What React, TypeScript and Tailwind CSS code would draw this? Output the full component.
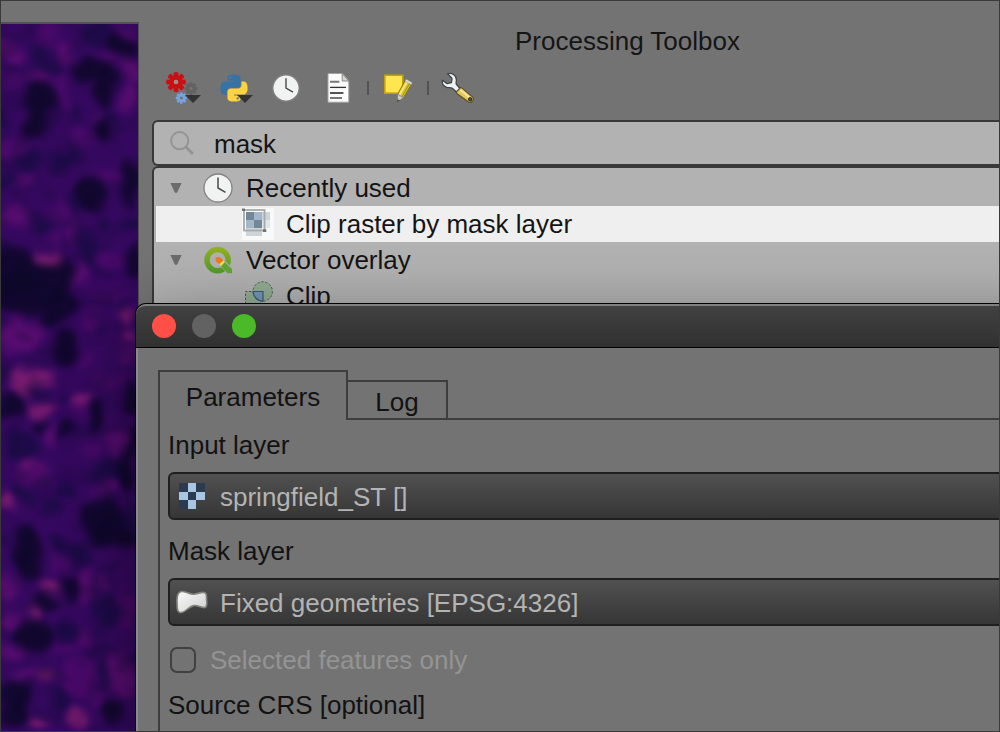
import React from "react";

type Blob = [x: number, y: number, rx: number, ry: number, tone: number];

const TONES = ["#0d0829", "#1c0b47", "#4a0a69", "#5a0d70", "#821e72"];

const BLOBS: Blob[] = [
  [95, 35, 12, 14, 1], [122, 44, 16, 12, 0], [84, 70, 14, 10, 0], [104, 86, 10, 22, 0],
  [112, 72, 8, 8, 0], [128, 32, 10, 6, 2], [110, 60, 14, 5, 2], [132, 70, 8, 14, 3],
  [128, 96, 8, 12, 3], [50, 34, 8, 14, 2], [64, 52, 7, 14, 3], [10, 50, 12, 14, 3],
  [40, 54, 10, 10, 1], [52, 68, 10, 8, 1], [38, 76, 12, 6, 3], [60, 84, 10, 8, 2],
  [40, 100, 16, 18, 0], [36, 128, 14, 14, 0], [14, 84, 12, 8, 2], [4, 118, 5, 14, 1],
  [102, 130, 10, 12, 0], [114, 118, 8, 6, 1], [98, 117, 8, 3, 3], [72, 112, 5, 6, 1],
  [82, 138, 9, 14, 2], [62, 100, 6, 12, 2], [12, 150, 16, 14, 2], [56, 162, 12, 12, 1],
  [74, 152, 8, 8, 1], [28, 162, 12, 10, 1], [24, 184, 8, 8, 3], [8, 180, 9, 6, 1],
  [90, 194, 15, 17, 0], [72, 204, 8, 9, 1], [130, 184, 8, 22, 0], [108, 174, 12, 8, 2],
  [58, 212, 8, 12, 2], [16, 216, 16, 10, 3], [42, 224, 12, 10, 1], [105, 224, 8, 10, 1],
  [130, 226, 8, 10, 1], [72, 234, 6, 14, 3], [54, 240, 6, 10, 2], [88, 250, 10, 14, 1],
  [12, 270, 26, 24, 0], [20, 294, 30, 24, 0], [56, 280, 22, 22, 0], [46, 260, 10, 6, 4],
  [60, 305, 18, 18, 0], [80, 272, 6, 14, 3], [112, 258, 12, 10, 2], [132, 262, 7, 14, 0],
  [104, 294, 22, 6, 2], [47, 321, 12, 7, 0], [92, 318, 10, 10, 2], [129, 318, 7, 7, 4],
  [126, 336, 7, 5, 4], [130, 354, 7, 7, 3], [22, 338, 18, 15, 3], [64, 348, 14, 18, 0],
  [8, 352, 8, 6, 2], [90, 358, 10, 8, 2], [4, 378, 5, 10, 1], [34, 377, 22, 6, 4],
  [24, 388, 10, 8, 4], [10, 406, 13, 11, 0], [40, 410, 16, 6, 4], [80, 400, 10, 11, 3],
  [80, 398, 10, 5, 4], [42, 391, 9, 5, 1], [62, 400, 6, 6, 1], [96, 415, 8, 18, 0],
  [40, 426, 6, 8, 0], [70, 432, 6, 12, 0], [54, 437, 7, 10, 3], [92, 448, 12, 6, 2],
  [118, 444, 7, 12, 3], [130, 396, 6, 14, 0], [132, 446, 6, 24, 0], [108, 380, 18, 6, 2],
  [22, 446, 18, 12, 1], [26, 465, 5, 5, 4], [34, 474, 16, 9, 3], [110, 470, 20, 12, 1],
  [126, 478, 10, 16, 0], [6, 504, 7, 8, 4], [24, 494, 10, 8, 1], [48, 506, 12, 8, 1],
  [68, 490, 12, 10, 1], [104, 490, 11, 6, 3], [100, 518, 24, 18, 0], [112, 536, 24, 14, 0],
  [130, 516, 6, 18, 1], [28, 546, 15, 22, 0], [30, 568, 11, 14, 0], [62, 542, 8, 8, 1],
  [80, 556, 12, 12, 1], [60, 562, 8, 12, 2], [48, 589, 11, 6, 4], [70, 590, 11, 12, 0],
  [87, 586, 7, 15, 3], [104, 582, 6, 10, 3], [8, 586, 9, 16, 3], [44, 604, 12, 7, 0],
  [32, 613, 6, 6, 4], [10, 620, 10, 8, 3], [34, 636, 20, 16, 0], [68, 632, 12, 10, 1],
  [82, 638, 9, 8, 3], [108, 612, 14, 16, 1], [128, 610, 10, 20, 2], [10, 650, 14, 6, 3],
  [66, 650, 12, 5, 2], [44, 676, 11, 8, 4], [24, 674, 9, 5, 3], [78, 678, 18, 18, 2],
  [122, 676, 14, 22, 3], [106, 672, 6, 12, 1], [16, 696, 17, 16, 0], [12, 716, 16, 12, 0],
  [114, 712, 14, 9, 0], [76, 718, 10, 10, 4], [38, 724, 10, 6, 4], [60, 700, 10, 12, 1],
  [96, 700, 8, 12, 2],
];

function HeatMap() {
  return (
    <svg
      className="block size-full"
      viewBox="1 24 137 707"
      preserveAspectRatio="xMinYMin slice"
      role="img"
      aria-label="Surface temperature raster"
    >
      <defs>
        <filter id="soften" filterUnits="userSpaceOnUse" x="-20" y="0" width="200" height="760" colorInterpolationFilters="sRGB">
          <feGaussianBlur stdDeviation="3" result="soft" />
          <feTurbulence type="fractalNoise" baseFrequency="0.04" numOctaves="1" seed="11" result="warp" />
          <feDisplacementMap in="soft" in2="warp" scale="22" xChannelSelector="R" yChannelSelector="G" />
          <feGaussianBlur stdDeviation="2.5" />
        </filter>
        <filter id="mottle" x="0" y="0" width="100%" height="100%" colorInterpolationFilters="sRGB">
          <feTurbulence type="fractalNoise" baseFrequency="0.035 0.045" numOctaves="2" seed="7" />
          <feColorMatrix values="0 0 0 0 0.08  0 0 0 0 0.04  0 0 0 0 0.22  3 0 0 0 -1.4" />
        </filter>
      </defs>
      <g filter="url(#soften)">
        <rect x="-40" y="-20" width="240" height="800" fill="#35085f" />
        {BLOBS.map(([x, y, rx, ry, tone], i) => (
          <ellipse key={i} cx={x} cy={y} rx={rx} ry={ry} fill={TONES[tone]} opacity="0.9" />
        ))}
      </g>
      <rect x="0" y="0" width="160" height="760" filter="url(#mottle)" opacity="0.35" />
    </svg>
  );
}

function Gear({ x, y, r, color, hub }: { x: number; y: number; r: number; color: string; hub: string }) {
  return (
    <g transform={`translate(${x} ${y}) scale(${r / 10})`}>
      {[0, 45, 90, 135, 180, 225, 270, 315].map((a) => (
        <path key={a} d="M-2 -5 L-2.5 -9.2 Q0 -11 2.5 -9.2 L2 -5Z" fill={color} transform={`rotate(${a})`} />
      ))}
      <circle r="4.6" fill="none" stroke={color} strokeWidth="4.6" />
      <circle r="2.3" fill={hub} />
    </g>
  );
}

function ModelIcon() {
  return (
    <svg className="size-[52px]" viewBox="0 0 52 52" aria-hidden="true">
      <Gear x={35} y={26.5} r={6.5} color="#626262" hub="#737373" />
      <Gear x={20} y={20} r={10} color="#cb1013" hub="#a88" />
      <Gear x={25.3} y={36} r={5.8} color="#79a3df" hub="#737373" />
      <path d="M29 33H45L37 41Z" fill="#333" />
    </svg>
  );
}

function PythonIcon() {
  return (
    <svg className="size-[52px]" viewBox="0 0 52 52" aria-hidden="true">
      <g transform="translate(12.5 12.6) scale(1.125)">
        <path
          fill="#3573a6"
          d="M14.25.18l.9.2.73.26.59.3.45.32.34.34.25.34.16.33.1.3.04.26.02.2-.01.13V8.5l-.05.63-.13.55-.21.46-.26.38-.3.31-.33.25-.35.19-.35.14-.33.1-.3.07-.26.04-.21.02H8.77l-.69.05-.59.14-.5.22-.41.27-.33.32-.27.35-.2.36-.15.37-.1.35-.07.32-.04.27-.02.21v3.06H3.17l-.21-.03-.28-.07-.32-.12-.35-.18-.36-.26-.36-.36-.35-.46-.32-.59-.28-.73-.21-.88-.14-1.05-.05-1.23.06-1.22.16-1.04.24-.87.32-.71.36-.57.4-.44.42-.33.42-.24.4-.16.36-.1.32-.05.24-.01h.16l.06.01h8.16v-.83H6.18l-.01-2.75-.02-.37.05-.34.11-.31.17-.28.25-.26.31-.23.38-.2.44-.18.51-.15.58-.12.64-.1.71-.06.77-.04.84-.02 1.27.05zm-6.3 1.98l-.23.33-.08.41.08.41.23.34.33.22.41.09.41-.09.33-.22.23-.34.08-.41-.08-.41-.23-.33-.33-.22-.41-.09-.41.09z"
        />
        <path
          fill="#fcd343"
          d="M21.04 6.11l.28.06.32.12.35.18.36.27.36.35.35.47.32.59.28.73.21.88.14 1.04.05 1.23-.06 1.23-.16 1.04-.24.86-.32.71-.36.57-.4.45-.42.33-.42.24-.4.16-.36.09-.32.05-.24.02-.16-.01h-8.22v.82h5.84l.01 2.76.02.36-.05.34-.11.31-.17.29-.25.25-.31.24-.38.2-.44.17-.51.15-.58.13-.64.09-.71.07-.77.04-.84.01-1.27-.04-1.07-.14-.9-.2-.73-.25-.59-.3-.45-.33-.34-.34-.25-.34-.16-.33-.1-.3-.04-.25-.02-.2.01-.13v-5.34l.05-.64.13-.54.21-.46.26-.38.3-.32.33-.24.35-.2.35-.14.33-.1.3-.06.26-.04.21-.02.13-.01h5.84l.69-.05.59-.14.5-.21.41-.28.33-.32.27-.35.2-.36.15-.36.1-.35.07-.32.04-.28.02-.21V6.07h2.09l.14.01zm-6.47 14.25l-.23.33-.08.41.08.41.23.33.33.23.41.08.41-.08.33-.23.23-.33.08-.41-.08-.41-.23-.33-.33-.23-.41-.08-.41.08z"
        />
      </g>
      <path d="M29 33H45L37 41Z" fill="#333" />
    </svg>
  );
}

function ClockFace({ className }: { className: string }) {
  return (
    <svg className={className} viewBox="0 0 32 32" aria-hidden="true">
      <circle cx="16" cy="16" r="14" fill="#f1f3f2" stroke="#82827f" strokeWidth="1.3" />
      <path d="M16 5.5V16L23.5 20.3" fill="none" stroke="#4a4a4a" strokeWidth="1.5" />
    </svg>
  );
}

function DocumentIcon() {
  return (
    <svg className="size-[52px]" viewBox="0 0 52 52" aria-hidden="true">
      <path d="M16 11.5H30.5L36.8 18.5V40.2H16Z" fill="#fcfcfc" stroke="#a2a2a0" strokeWidth="1" />
      <path d="M30.2 11.5V19H36.8Z" fill="#d4d6d2" stroke="#868884" strokeWidth="1" />
      <path d="M18 19.8H27.3M18 31H31.2M18 36H30" stroke="#777" strokeWidth="2" />
      <path d="M18 25.4H34" stroke="#333" strokeWidth="1.3" />
      <path d="M18 31H31.5" stroke="#333" strokeWidth="1" />
    </svg>
  );
}

function NoteIcon() {
  return (
    <svg className="size-[52px]" viewBox="0 0 52 52" aria-hidden="true">
      <rect x="12.8" y="13.2" width="18" height="18" fill="#fee74e" stroke="#c19f0d" strokeWidth="1.6" />
      <path d="M33.7 17.5L40 21.2L31.6 35.5L25.3 40.2L25.7 32Z" fill="#d8c42c" stroke="#82720f" strokeWidth="0.9" />
      <path d="M35.6 18.8L27.4 33" stroke="#f6e887" strokeWidth="1.8" />
      <path d="M38.3 20.2L30 34.7" stroke="#a28f14" strokeWidth="1" />
      <path d="M25.7 32.3L31.4 35.6L25.3 40.2Z" fill="#c9c9c5" stroke="#777" strokeWidth="0.7" />
      <path d="M25.6 37.2L28 38.3L25.1 40.4Z" fill="#444" />
      <path d="M34.2 17.2L40.2 20.8L39.1 22.6L33.1 19.1Z" fill="#e4e4e4" stroke="#999" strokeWidth="0.6" />
    </svg>
  );
}

function WrenchIcon() {
  return (
    <svg className="size-[52px]" viewBox="0 0 52 52" aria-hidden="true">
      <path
        d="M15.5 11.8C19.5 10.3 24.4 13.1 24.4 18C24.3 20 23.8 21.3 24.3 22.3L28.5 27L25 30.4L20.3 26.2C18.5 25.2 16.5 26.2 14 25.1C11.2 23.8 9.8 21 10.4 18.2L15.1 21.6L19.5 20.5L20 16.3Z"
        fill="#f0f1f2"
        stroke="#42464a"
        strokeWidth="1.3"
        strokeLinejoin="round"
      />
      <path
        d="M24.3 30L28.4 25.5Q29.6 25.6 30.6 26.6L41 35.4Q42.1 37.2 40.6 39.1Q38.8 41.1 36.6 40L25.8 32.3Q24.4 31.2 24.3 30Z"
        fill="#e6c65a"
        stroke="#57512f"
        strokeWidth="1.2"
      />
      <path d="M28.6 28L37.7 35.8" stroke="#f6e3a0" strokeWidth="2" />
      <circle cx="38.2" cy="37.3" r="1.7" fill="#555" stroke="#222" strokeWidth="1" />
    </svg>
  );
}

function ClipRasterIcon() {
  return (
    <svg className="size-8" viewBox="0 0 32 32" aria-hidden="true">
      <rect width="32" height="32" fill="#f8f9f9" />
      <path d="M4 20H20V28H4ZM20 4H28V12H20Z" fill="#cdd5db" />
      <path d="M20 12H28V20H20Z" fill="#e0e6ec" />
      <path d="M4 4H12V12H4ZM12 12H20V20H12Z" fill="#728798" />
      <path d="M12 4H20V12H12ZM4 12H12V20H4Z" fill="#a4b7c8" />
      <rect x="2" y="2" width="20.5" height="20.5" fill="none" stroke="#a8a8a6" strokeWidth="1.8" />
      <path d="M0 0.5H3V3H0ZM21 21.3H24.3V24H21Z" fill="#727272" />
    </svg>
  );
}

function QgisIcon() {
  return (
    <svg className="size-8" viewBox="0 0 32 32" aria-hidden="true">
      <defs>
        <linearGradient id="qgis-ring" gradientUnits="userSpaceOnUse" x1="0" y1="3" x2="0" y2="29">
          <stop offset="0" stopColor="#96b21f" />
          <stop offset="1" stopColor="#4f9a2c" />
        </linearGradient>
      </defs>
      <circle cx="15.6" cy="16.1" r="10.6" fill="none" stroke="url(#qgis-ring)" strokeWidth="5.4" />
      <path d="M17.6 21.6L22.6 16.6L31 24.6L25.6 29.6Z" fill="#b0b0b0" />
      <path d="M18.6 21.6L22.3 17.9L30 25V29.2H25.6Z" fill="#62a634" />
      <path d="M17 19.6L20.9 16.2L22.6 18.2L19 22.2Z" fill="#f4e645" />
      <path d="M13.6 13.3H18L20.8 15.6V17.2L17.3 20L13.6 17Z" fill="#ee7a22" />
    </svg>
  );
}

function ClipVectorIcon() {
  return (
    <svg className="size-8" viewBox="0 0 32 32" aria-hidden="true">
      <circle cx="20.7" cy="11.5" r="9.7" fill="#93ad92" />
      <path d="M3.5 11.5H21V32H3.5Z" fill="#93ad92" />
      <circle cx="20.7" cy="11.5" r="9.7" fill="none" stroke="#45604a" strokeWidth="1" strokeDasharray="2.4 1.6" />
      <path d="M3.5 32V11.5H12" fill="none" stroke="#45604a" strokeWidth="1" strokeDasharray="2.4 1.6" />
      <path d="M11 11.5H21V21.2C15.4 21 11.3 16.8 11 11.5Z" fill="#7896b2" stroke="#355c81" strokeWidth="1.2" />
    </svg>
  );
}

function RasterIcon() {
  return (
    <svg className="size-[26px]" viewBox="0 0 26 26" aria-hidden="true">
      <path d="M0 0H9V9H0ZM17 0H26V9H17ZM9 9H17V17H9ZM0 17H9V26H0Z" fill="#2b3a4e" />
      <path d="M9 0H17V9H9ZM0 9H9V17H0ZM17 9H26V17H17ZM9 17H17V26H9Z" fill="#a9c5e4" />
    </svg>
  );
}

function PolygonIcon() {
  return (
    <svg className="h-6 w-8" viewBox="0 0 32 24" aria-hidden="true">
      <defs>
        <linearGradient id="poly" x1="0" y1="0" x2="1" y2="1">
          <stop offset="0" stopColor="#fafafa" />
          <stop offset="1" stopColor="#cfcfcf" />
        </linearGradient>
      </defs>
      <path
        d="M5 1.5C9 0.8 13 4.2 17.5 4.2C22 4.2 26 1 29.2 2.8C31.6 4.8 30 8 30.7 11.4C31 14.6 31 17.3 28.4 17.6C24.5 17.6 21.5 15 17.5 15.6C12 16.8 9.3 23 4 22.6C0.4 21.5 1.3 17 1 11.7C0.8 7 1.4 2.6 5 1.5Z"
        fill="url(#poly)"
        stroke="#83837d"
        strokeWidth="1.6"
      />
    </svg>
  );
}

function SearchIcon() {
  return (
    <svg className="size-6" viewBox="0 0 24 24" fill="none" stroke="#949494" aria-hidden="true">
      <circle cx="9.7" cy="9.7" r="8.6" strokeWidth="2" />
      <path d="M16 16L23 23" strokeWidth="3" />
    </svg>
  );
}

function ToolButton({ label, children }: { label: string; children: React.ReactNode }) {
  return (
    <button type="button" aria-label={label} className="flex size-[52px] items-center justify-center">
      {children}
    </button>
  );
}

function Separator() {
  return (
    <div className="flex w-2 justify-center">
      <div className="h-3.5 w-0.5 bg-[#525252]" />
    </div>
  );
}

function Twisty() {
  return (
    <svg className="h-2.5 w-3" viewBox="0 0 12 10" aria-hidden="true">
      <path d="M0.4 0H11.6L7.4 9Q6 10.8 4.6 9Z" fill="#6c6c6c" />
    </svg>
  );
}

function GroupRow({ icon, label }: { icon: React.ReactNode; label: string }) {
  return (
    <li role="treeitem" aria-expanded="true" className="flex h-9 items-center pl-3.5">
      <Twisty />
      <span className="mr-3 ml-5">{icon}</span>
      {label}
    </li>
  );
}

function ToolRow({ icon, label, selected = false }: { icon: React.ReactNode; label: string; selected?: boolean }) {
  return (
    <li
      role="treeitem"
      aria-selected={selected}
      className={selected ? "flex h-9 items-center gap-3 bg-[#efefef] pl-[86px]" : "flex h-9 items-center gap-3 pl-[86px]"}
    >
      {icon}
      {label}
    </li>
  );
}

function LayerField({ id, label, value, icon }: { id: string; label: string; value: string; icon: React.ReactNode }) {
  return (
    <div className="flex flex-col gap-[9px]">
      <label htmlFor={id}>{label}</label>
      <div className="relative">
        <select
          id={id}
          defaultValue={value}
          className="h-12 w-full appearance-none rounded-md border-2 border-[#1f1f1f] bg-linear-to-b from-[#515151] to-[#363636] pt-0.5 pl-[50px] text-[#b4b4b4] outline-none"
        >
          <option>{value}</option>
        </select>
        <span className="pointer-events-none absolute inset-y-0 left-2 flex w-8 items-center justify-center">{icon}</span>
      </div>
    </div>
  );
}

function Toolbox() {
  return (
    <section className="flex min-w-0 flex-1 flex-col pt-[22px] pl-[13px]">
      <h1 className="pl-[104px] text-center text-[#151515]">Processing Toolbox</h1>
      <div className="mt-[3px] flex items-center pl-1" role="toolbar" aria-label="Toolbox">
        <ToolButton label="Models"><ModelIcon /></ToolButton>
        <ToolButton label="Scripts"><PythonIcon /></ToolButton>
        <ToolButton label="History"><ClockFace className="size-[30px]" /></ToolButton>
        <ToolButton label="Results viewer"><DocumentIcon /></ToolButton>
        <Separator />
        <ToolButton label="Edit features in place"><NoteIcon /></ToolButton>
        <Separator />
        <ToolButton label="Options"><WrenchIcon /></ToolButton>
      </div>
      <label className="mt-1.5 flex h-[46px] items-center gap-5 rounded-l-md border-2 border-r-0 border-[#393939] bg-[#b2b2b2] pl-4">
        <SearchIcon />
        <input
          type="text"
          aria-label="Search"
          defaultValue="mask"
          className="h-9 min-w-0 flex-1 bg-transparent pt-0.5 text-[#141414] outline-none"
        />
      </label>
      <ul role="tree" aria-label="Algorithms" className="flex-1 rounded-tl-md border-t-2 border-l-2 border-[#393939] bg-[#b2b2b2] pt-0.5 pl-0.5 text-[#141414]">
        <GroupRow icon={<ClockFace className="size-8" />} label="Recently used" />
        <ToolRow icon={<ClipRasterIcon />} label="Clip raster by mask layer" selected />
        <GroupRow icon={<QgisIcon />} label="Vector overlay" />
        <ToolRow icon={<ClipVectorIcon />} label="Clip" />
      </ul>
    </section>
  );
}

function Dialog() {
  return (
    <div
      role="dialog"
      aria-label="Clip raster by mask layer"
      className="absolute top-[302px] -right-24 bottom-0 left-[134px] flex flex-col overflow-hidden rounded-t-[11px] border-t border-l border-black bg-[#737373] shadow-[0_20px_70px_rgba(0,0,0,0.45)]"
    >
      <div className="flex h-11 shrink-0 items-start gap-4 rounded-t-[10px] border-t-2 border-b border-t-[#808080] border-b-black bg-linear-to-b from-[#414141] to-[#313131] pt-2 pl-4">
        <button type="button" aria-label="Close" className="size-6 rounded-full bg-[#ff4f47]" />
        <button type="button" aria-label="Minimise" className="size-6 rounded-full bg-[#626262]" />
        <button type="button" aria-label="Zoom" className="size-6 rounded-full bg-[#4aba28]" />
      </div>
      <div className="flex-1 border-l-2 border-[#8b8b8b] pt-[22px] pl-5">
        <div role="tablist" className="flex items-end">
          <button
            type="button"
            role="tab"
            aria-selected="true"
            className="h-[50px] w-[190px] border-2 border-b-0 border-[#3d3d3d] pt-0.5"
          >
            Parameters
          </button>
          <button
            type="button"
            role="tab"
            aria-selected="false"
            className="h-10 w-[100px] border-2 border-l-0 border-[#3d3d3d] pt-0.5"
          >
            Log
          </button>
          <div className="h-0.5 flex-1 bg-[#3d3d3d]" />
        </div>
        <div role="tabpanel" className="h-full border-l-2 border-[#3d3d3d] pt-[7px] pl-2">
          <div className="flex flex-col gap-[13px]">
            <LayerField id="input-layer" label="Input layer" value="springfield_ST []" icon={<RasterIcon />} />
            <LayerField id="mask-layer" label="Mask layer" value="Fixed geometries [EPSG:4326]" icon={<PolygonIcon />} />
          </div>
          <label className="mt-4 flex items-center gap-3.5 pl-0.5 text-[#949494]">
            <input
              type="checkbox"
              disabled
              className="size-[26px] appearance-none rounded-[7px] border-2 border-[#404040]"
            />
            Selected features only
          </label>
          <p className="mt-[9px]">Source CRS [optional]</p>
        </div>
      </div>
    </div>
  );
}

export default function App() {
  return (
    <main className="relative flex h-screen overflow-hidden border border-[#393939] bg-[#737373] font-['Liberation_Sans',Arial,sans-serif] text-[26px] leading-9 text-[#121212]">
      <div className="mt-[21px] w-[138px] shrink-0 border-t-2 border-r border-[#525252]">
        <HeatMap />
      </div>
      <Toolbox />
      <Dialog />
    </main>
  );
}
